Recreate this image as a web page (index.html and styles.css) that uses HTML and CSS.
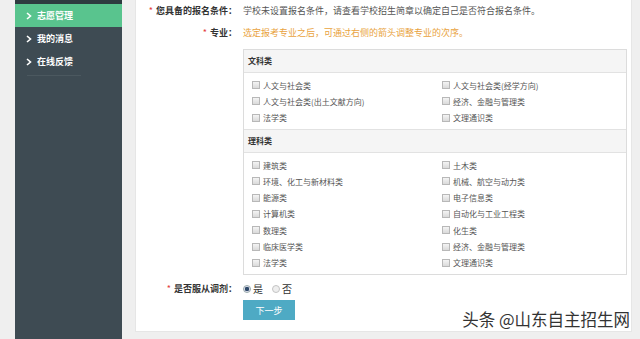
FILE: index.html
```html
<!DOCTYPE html>
<html lang="zh-CN">
<head>
    <meta charset="UTF-8">
    <meta name="viewport" content="width=device-width, initial-scale=1.0">
    <title>志愿管理</title>
    <link rel="stylesheet" href="styles.css">
</head>
<body>
    <div class="layout">
        <div class="sidebar">
            <div class="side-top"></div>
            <a class="nav-item active" href="#"><svg class="chev" viewBox="0 0 6 8"><polyline points="1,1 4.5,4 1,7"/></svg>志愿管理</a>
            <a class="nav-item" href="#"><svg class="chev" viewBox="0 0 6 8"><polyline points="1,1 4.5,4 1,7"/></svg>我的消息</a>
            <a class="nav-item last" href="#"><svg class="chev" viewBox="0 0 6 8"><polyline points="1,1 4.5,4 1,7"/></svg>在线反馈</a>
        </div>

        <div class="panel">
            <div class="form-row">
                <div class="label"><span class="req">*</span>您具备的报名条件：</div>
                <div class="value">学校未设置报名条件，请查看学校招生简章以确定自己是否符合报名条件。</div>
            </div>
            <div class="form-row">
                <div class="label"><span class="req">*</span>专业：</div>
                <div class="value hint">选定报考专业之后，可通过右侧的箭头调整专业的次序。</div>
            </div>

            <div class="form-row">
                <div class="label"></div>
                <div class="major-box">
                    <div class="group-head">文科类</div>
                    <div class="group-body">
                        <label class="major"><span class="cb"></span>人文与社会类</label>
                        <label class="major"><span class="cb"></span>人文与社会类(经学方向)</label>
                        <label class="major"><span class="cb"></span>人文与社会类(出土文献方向)</label>
                        <label class="major"><span class="cb"></span>经济、金融与管理类</label>
                        <label class="major"><span class="cb"></span>法学类</label>
                        <label class="major"><span class="cb"></span>文理通识类</label>
                    </div>
                    <div class="group-head">理科类</div>
                    <div class="group-body">
                        <label class="major"><span class="cb"></span>建筑类</label>
                        <label class="major"><span class="cb"></span>土木类</label>
                        <label class="major"><span class="cb"></span>环境、化工与新材料类</label>
                        <label class="major"><span class="cb"></span>机械、航空与动力类</label>
                        <label class="major"><span class="cb"></span>能源类</label>
                        <label class="major"><span class="cb"></span>电子信息类</label>
                        <label class="major"><span class="cb"></span>计算机类</label>
                        <label class="major"><span class="cb"></span>自动化与工业工程类</label>
                        <label class="major"><span class="cb"></span>数理类</label>
                        <label class="major"><span class="cb"></span>化生类</label>
                        <label class="major"><span class="cb"></span>临床医学类</label>
                        <label class="major"><span class="cb"></span>经济、金融与管理类</label>
                        <label class="major"><span class="cb"></span>法学类</label>
                        <label class="major"><span class="cb"></span>文理通识类</label>
                    </div>
                </div>
            </div>

            <div class="form-row radio-row">
                <div class="label"><span class="req">*</span>是否服从调剂：</div>
                <div class="value radios">
                    <label class="radio"><span class="rd checked"></span>是</label>
                    <label class="radio"><span class="rd"></span>否</label>
                </div>
            </div>
            <div class="form-row">
                <div class="label"></div>
                <div class="value"><button class="next-btn" type="button">下一步</button></div>
            </div>
        </div>
    </div>

    <div class="watermark">头条 @山东自主招生网</div>
</body>
</html>
```

FILE: styles.css
```css
body {
    margin: 0;
    background-color: #efefef;
    font-family: "Noto Sans CJK SC", "Noto Sans", sans-serif;
    font-size: 9px;
    color: #555;
    height: 339px;
    overflow: hidden;
}
.layout {
    display: flex;
    align-items: flex-start;
    padding-left: 15px;
    gap: 13px;
}
.sidebar {
    width: 107px;
    height: 339px;
    background-color: #3e4b53;
    flex-shrink: 0;
}
.side-top {
    height: 4px;
    background-color: #2e3b40;
}
.nav-item {
    display: flex;
    align-items: center;
    height: 23px;
    padding-left: 11px;
    color: #fff;
    text-decoration: none;
    font-size: 9px;
    font-weight: bold;
}
.nav-item.active {
    background-color: #59c48e;
}
.nav-item.last {
    position: relative;
}
.nav-item.last::after {
    content: "";
    position: absolute;
    left: 12px;
    bottom: -3px;
    width: 54px;
    border-bottom: 1px solid #4b585f;
}
.chev {
    width: 6px;
    height: 8px;
    margin-right: 5px;
    fill: none;
    stroke: #fff;
    stroke-width: 1.6;
}
.panel {
    width: 497px;
    height: 332px;
    background-color: #fff;
    border: 1px solid #e6e6e6;
    border-top: none;
    box-sizing: border-box;
}
.form-row {
    display: flex;
    align-items: flex-start;
    gap: 6px;
}
.label {
    width: 101px;
    flex-shrink: 0;
    text-align: right;
    font-weight: bold;
    color: #333;
    line-height: 12px;
    padding: 5px 0;
}
.req {
    color: #e4393c;
    margin-right: 3px;
    font-weight: normal;
}
.value {
    line-height: 12px;
    padding: 5px 0;
}
.hint {
    color: #e9a33e;
}
.major-box {
    width: 384px;
    margin-top: 5px;
    border: 1px solid #dcdcdc;
    box-sizing: border-box;
}
.group-head {
    height: 22px;
    line-height: 22px;
    padding-left: 4px;
    background-color: #f5f5f5;
    border-bottom: 1px solid #e2e2e2;
    color: #333;
    font-size: 8px;
    font-weight: bold;
}
.group-body {
    display: grid;
    grid-template-columns: 190px 1fr;
    padding: 4px 0 3px 8px;
    border-bottom: 1px solid #e2e2e2;
}
.group-body:last-child {
    border-bottom: none;
}
.major {
    display: flex;
    align-items: center;
    height: 16.3px;
    font-size: 8px;
    color: #555;
}
.cb {
    width: 6px;
    height: 6px;
    margin-right: 3px;
    border: 1px solid #b8b8b8;
    background: linear-gradient(#f4f4f4, #dadada);
}
.radio-row {
    margin-top: 3px;
}
.radios {
    display: flex;
    gap: 9px;
    color: #333;
    font-size: 10px;
}
.radio {
    display: flex;
    align-items: center;
}
.rd {
    width: 6px;
    height: 6px;
    margin-right: 2px;
    border-radius: 50%;
    border: 1px solid #c4c4c4;
    background-color: #eee;
}
.rd.checked {
    background: radial-gradient(circle, #2f4a6a 45%, #dde 60%);
    border-color: #9aa;
}
.next-btn {
    width: 52px;
    height: 20px;
    margin-top: -6px;
    padding: 0;
    border: none;
    background-color: #4eaac4;
    color: #fff;
    font-family: inherit;
    font-size: 9px;
}
.watermark {
    position: absolute;
    right: 10px;
    top: 307px;
    font-size: 16.5px;
    color: #333;
    text-shadow: 0 0 2px #fff, 0 0 2px #fff;
}
```
